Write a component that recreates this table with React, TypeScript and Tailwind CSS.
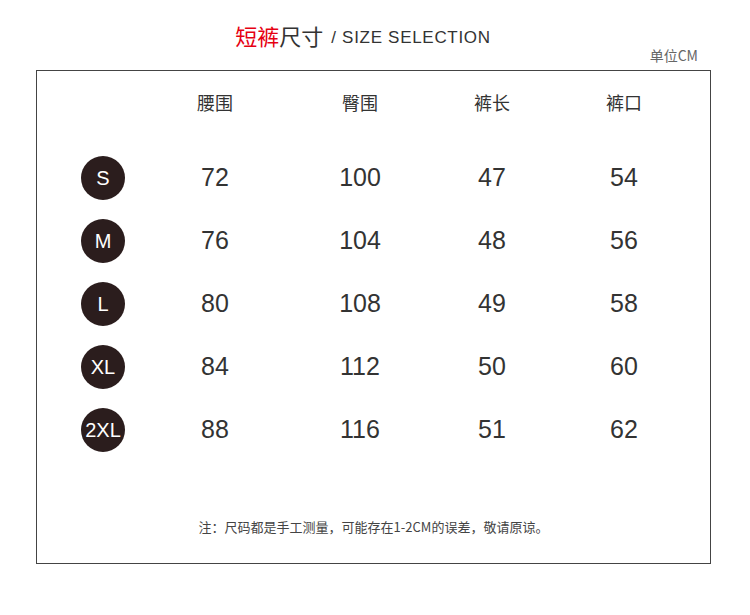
const SIZES = [
  { label: 'S', values: ['72', '100', '47', '54'] },
  { label: 'M', values: ['76', '104', '48', '56'] },
  { label: 'L', values: ['80', '108', '49', '58'] },
  { label: 'XL', values: ['84', '112', '50', '60'] },
  { label: '2XL', values: ['88', '116', '51', '62'] },
];

const HEADERS = ['腰围', '臀围', '裤长', '裤口'];

const cjk = "font-['Noto_Sans_CJK_SC',sans-serif]";
const latin = "font-['Liberation_Sans','Noto_Sans_CJK_SC',sans-serif]";

export default function App() {
  return (
    <div className="h-[615px] w-[750px] bg-white">
      {/* Title */}
      <div className="flex h-[70px] flex-col">
        <div className="flex h-[46px] items-end justify-center pr-[24px]">
          <span className={`${cjk} text-[22px] leading-none text-[#e60012]`}>短裤</span>
          <span className={`${cjk} text-[22px] leading-none text-[#333]`}>尺寸</span>
          <span className={`${latin} ml-[8px] text-[17px] leading-none tracking-[0.7px] text-[#333]`}>
            / SIZE SELECTION
          </span>
        </div>
        <div className="flex justify-end pr-[52px] pt-[2px]">
          <span className={`${cjk} text-[14px] leading-none text-[#666]`}>单位CM</span>
        </div>
      </div>

      {/* Table box */}
      <div className="ml-[36px] h-[494px] w-[675px] border border-[#444]">
        <div className="grid grid-cols-[88px_136px_154px_110px_154px] pl-[22px]">
          <div className="h-[62px]" />
          {HEADERS.map((h) => (
            <div key={h} className={`${cjk} flex h-[62px] items-center justify-center text-[18px] text-[#333]`}>
              {h}
            </div>
          ))}
        </div>

        <div className="mt-[13px] flex flex-col">
          {SIZES.map((row) => (
            <div key={row.label} className="grid h-[63px] grid-cols-[88px_136px_154px_110px_154px] items-center pl-[22px]">
              <div className="flex justify-center">
                <div
                  className={`${latin} flex h-[44px] w-[44px] items-center justify-center rounded-full bg-[#2b1d1d] text-[20px] text-white`}
                >
                  {row.label}
                </div>
              </div>
              {row.values.map((v, i) => (
                <div key={i} className={`${latin} text-center text-[25px] text-[#333]`}>
                  {v}
                </div>
              ))}
            </div>
          ))}
        </div>

        <p className={`${cjk} mt-[56px] text-center text-[13px] text-[#444]`}>
          注：尺码都是手工测量，可能存在1-2CM的误差，敬请原谅。
        </p>
      </div>
    </div>
  );
}
